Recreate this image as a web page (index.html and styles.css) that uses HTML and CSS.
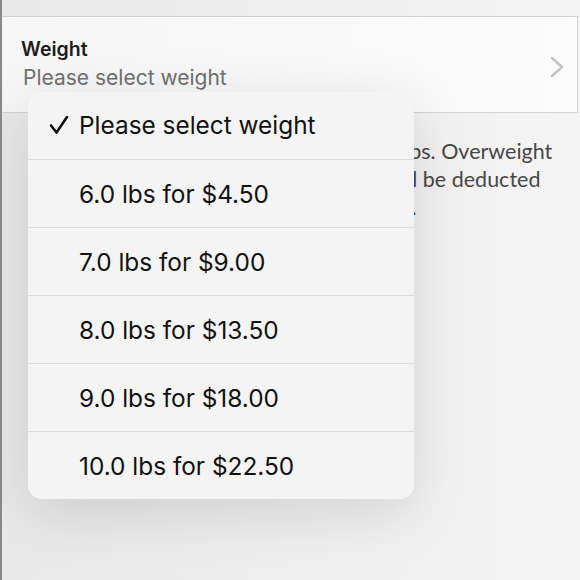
FILE: index.html
```html
<!DOCTYPE html>
<html lang="en">

<head>
    <meta charset="UTF-8">
    <meta name="viewport" content="width=device-width, initial-scale=1.0">
    <title>Weight</title>

    <link rel="stylesheet" href="styles.css">
</head>

<body>
    <main class="page">
        <div class="field">
            <div class="field-text">
                <p class="label">Weight</p>
                <p class="value">Please select weight</p>
            </div>
            <svg class="chevron" width="16" height="22" viewBox="0 0 16 22">
                <path d="M3 2 L13 11 L3 20" fill="none" stroke="#c2c2c2" stroke-width="2.4" stroke-linecap="round" stroke-linejoin="round" />
            </svg>
        </div>

        <p class="note">
            Include all packaging weight for your drops. Overweight<br>
            packages may be charged and all fees will be deducted<br>
            from your payout once this item has sold.
        </p>

        <ul class="menu">
            <li class="option selected">
                <svg class="check" width="20" height="20" viewBox="0 0 20 20">
                    <path d="M2 10.5 L7.5 17.5 L18 2" fill="none" stroke="#111" stroke-width="2.6" stroke-linecap="round" stroke-linejoin="round" />
                </svg>
                Please select weight
            </li>
            <li class="option">6.0 lbs for $4.50</li>
            <li class="option">7.0 lbs for $9.00</li>
            <li class="option">8.0 lbs for $13.50</li>
            <li class="option">9.0 lbs for $18.00</li>
            <li class="option">10.0 lbs for $22.50</li>
        </ul>
    </main>
</body>

</html>
```

FILE: styles.css
```css
* {
    margin: 0px;
    padding: 0px;
    box-sizing: border-box;
}

body {
    background-color: #efeeee;
    font-family: Inter, "Noto Sans", sans-serif;
}

.page {
    position: relative;
    height: 580px;
    border-left: 2px solid #8a8a8a;
    padding-top: 16px;
    background: linear-gradient(90deg, #e9e8e8 0%, #f1f0f0 60%, #f5f4f4 100%);
}

.field {
    height: 97px;
    margin-right: 2px;
    border: 1px solid #d2d2d2;
    border-left: none;
    background: linear-gradient(90deg, #f6f6f6 0%, #fbfbfb 100%);
    display: flex;
    align-items: center;
    justify-content: space-between;
    padding: 0 12px 0 19px;
}

.label {
    font-size: 19.5px;
    font-weight: 600;
    color: #1c1c1c;
    line-height: 26px;
}

.value {
    font-size: 21px;
    color: #707070;
    line-height: 32px;
    margin-left: 2px;
}

.chevron {
    margin-top: 4px;
}

.note {
    font-family: Lato, sans-serif;
    font-size: 21.5px;
    line-height: 28px;
    color: #474747;
    padding: 24px 0 0 27px;
    white-space: nowrap;
}

.menu {
    position: absolute;
    left: 26px;
    top: 92px;
    width: 386px;
    list-style: none;
    background-color: #f4f4f4;
    border-radius: 14px;
    box-shadow: 0 14px 60px rgba(0, 0, 0, 0.13);
    overflow: hidden;
}

.option {
    height: 68px;
    display: flex;
    align-items: center;
    padding-left: 51px;
    font-size: 24.4px;
    color: #111;
    border-top: 1px solid #dcdcdc;
}

.option:first-child {
    border-top: none;
    height: 67px;
    padding-bottom: 2px;
}

.check {
    margin-left: -30px;
    margin-right: 10px;
}
```
